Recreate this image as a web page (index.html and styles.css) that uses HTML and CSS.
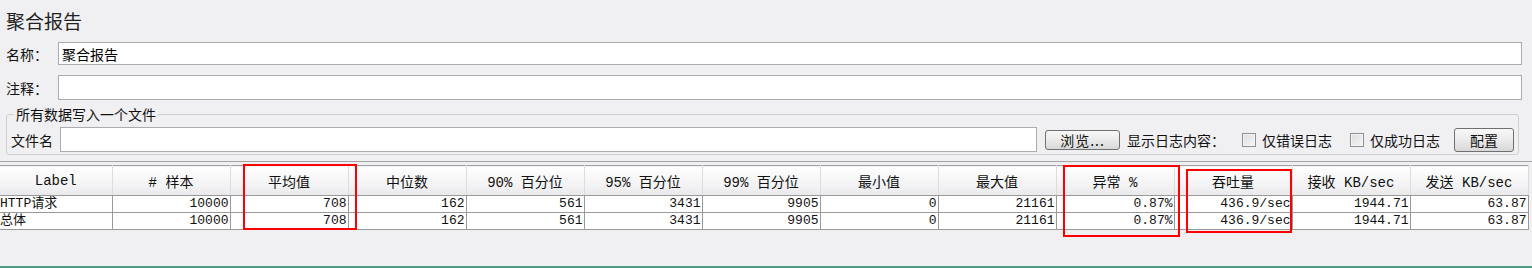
FILE: index.html
```html
<!DOCTYPE html>
<html lang="zh-CN">
<head>
    <meta charset="UTF-8">
    <meta name="viewport" content="width=device-width, initial-scale=1.0">
    <title>聚合报告</title>
    <link rel="stylesheet" href="styles.css">
</head>
<body>
    <div class="panel">
        <div class="title">聚合报告</div>
        <div class="field name-row">
            <label class="field-label">名称：</label>
            <input class="text-input" type="text" value="聚合报告">
        </div>
        <div class="field comment-row">
            <label class="field-label">注释：</label>
            <input class="text-input" type="text" value="">
        </div>
        <fieldset class="file-box">
            <legend>所有数据写入一个文件</legend>
            <div class="file-row">
                <span class="file-label">文件名</span>
                <input class="text-input file-input" type="text" value="">
                <button class="btn browse">浏览...</button>
                <span class="log-label">显示日志内容：</span>
                <span class="check first"></span>
                <span class="check-text">仅错误日志</span>
                <span class="check second"></span>
                <span class="check-text">仅成功日志</span>
                <button class="btn config">配置</button>
            </div>
        </fieldset>
    </div>

    <div class="results">
        <table class="report">
            <colgroup>
                <col class="col-first">
                <col span="12" class="col">
            </colgroup>
            <thead>
                <tr>
                    <th>Label</th>
                    <th># 样本</th>
                    <th>平均值</th>
                    <th>中位数</th>
                    <th>90% 百分位</th>
                    <th>95% 百分位</th>
                    <th>99% 百分位</th>
                    <th>最小值</th>
                    <th>最大值</th>
                    <th>异常 %</th>
                    <th>吞吐量</th>
                    <th>接收 KB/sec</th>
                    <th>发送 KB/sec</th>
                </tr>
            </thead>
            <tbody id="rows"></tbody>
        </table>
        <div class="mark mark-avg"></div>
        <div class="mark mark-error"></div>
        <div class="mark mark-rate"></div>
    </div>
    <div class="status"></div>

    <script>
        const rows = [
            ["HTTP请求", "10000", "708", "162", "561", "3431", "9905", "0", "21161", "0.87%", "436.9/sec", "1944.71", "63.87"],
            ["总体", "10000", "708", "162", "561", "3431", "9905", "0", "21161", "0.87%", "436.9/sec", "1944.71", "63.87"]
        ];
        const tbody = document.getElementById("rows");

        rows.forEach(row => {
            const tr = document.createElement("tr");
            row.forEach((value, i) => {
                const td = document.createElement("td");
                td.textContent = value;
                if (i === 0) td.classList.add("name");
                tr.appendChild(td);
            });
            tbody.appendChild(tr);
        });
    </script>
</body>
</html>
```

FILE: styles.css
```css
body {
    margin: 0;
    background-color: #f0eff2;
    font-family: "Noto Sans CJK SC", sans-serif;
    font-size: 14px;
    color: #111;
    height: 268px;
    overflow: hidden;
}

.panel {
    padding-left: 6px;
}

.title {
    height: 42px;
    padding-top: 10px;
    box-sizing: border-box;
    font-size: 19px;
    line-height: 22px;
    color: #222;
}

.field {
    display: flex;
    align-items: center;
    padding-right: 10px;
}

.field-label {
    width: 52px;
    line-height: 16px;
}

.text-input {
    flex: 1;
    min-width: 0;
    margin: 0;
    border: 1px solid #acacb0;
    background: #fff;
    font-family: "Noto Sans CJK SC", sans-serif;
    font-size: 14px;
    padding: 0 3px;
    box-sizing: border-box;
    color: #000;
    outline: none;
}

.name-row .text-input {
    height: 23px;
}

.comment-row {
    margin-top: 10px;
}

.comment-row .text-input {
    height: 25px;
}

.file-box {
    margin: 6px 13px 0 0;
    padding: 5px 4px 2px 4px;
    border: 1px solid #cfcfd3;
    border-radius: 3px;
}

.file-box legend {
    margin-left: 3px;
    padding: 0 2px;
    line-height: 16px;
}

.file-row {
    display: flex;
    align-items: center;
    height: 25px;
}

.file-label {
    width: 42px;
    margin-right: 7px;
    line-height: 16px;
}

.file-input {
    height: 25px;
}

.btn {
    margin: 0;
    padding: 0;
    border: 1px solid #707070;
    border-radius: 3px;
    background: linear-gradient(#f8f8f8, #ececec 45%, #d8d8d8);
    font-family: "Noto Sans CJK SC", sans-serif;
    font-size: 14px;
    color: #111;
    line-height: 16px;
}

.browse {
    width: 75px;
    height: 20px;
    margin-left: 8px;
    letter-spacing: 1px;
}

.config {
    width: 60px;
    height: 24px;
    margin-left: 14px;
}

.log-label {
    margin-left: 7px;
    width: 98px;
}

.check {
    width: 14px;
    height: 14px;
    box-sizing: border-box;
    border: 1px solid #8e8f8f;
    background: linear-gradient(135deg, #dcdcdc, #f6f6f6);
    box-shadow: inset 0 0 0 1px #f4f4f4;
}

.check.first {
    margin-left: 17px;
}

.check.second {
    margin-left: 18px;
}

.check-text {
    margin-left: 6px;
    width: 70px;
}

.results {
    position: relative;
    margin-top: 6px;
    border-top: 1px solid #a5a5a8;
    padding-top: 3px;
    height: 101px;
}

.report {
    border-collapse: collapse;
    table-layout: fixed;
    width: 1528px;
    font-family: "Liberation Mono", "Noto Sans CJK SC", monospace;
    color: #111;
}

.col-first {
    width: 112px;
}

.col {
    width: 118px;
}

.report th {
    height: 29px;
    padding: 0;
    font-size: 14px;
    font-weight: normal;
    background: linear-gradient(#ffffff, #f4f4f6 60%, #e9e9ec);
    border-top: 1px solid #a0a0a0;
    border-right: 1px solid #dcdcdf;
    border-bottom: 1px solid #9a9a9a;
    white-space: nowrap;
}

.report td {
    height: 16px;
    padding: 0 1px 0 0;
    font-size: 13px;
    line-height: 16px;
    text-align: right;
    background: #fff;
    border-right: 1px solid #9a9a9a;
    border-bottom: 1px solid #9a9a9a;
    white-space: nowrap;
    overflow: hidden;
}

.report td.name {
    text-align: left;
    padding: 0;
}

.mark {
    position: absolute;
    border: 2px solid #ff0000;
    box-sizing: border-box;
}

.mark-avg {
    left: 243px;
    top: 2px;
    width: 114px;
    height: 66px;
}

.mark-error {
    left: 1063px;
    top: 3px;
    width: 117px;
    height: 72px;
}

.mark-rate {
    left: 1186px;
    top: 7px;
    width: 106px;
    height: 64px;
}

.status {
    height: 2px;
    background: #4e9a84;
}
```
